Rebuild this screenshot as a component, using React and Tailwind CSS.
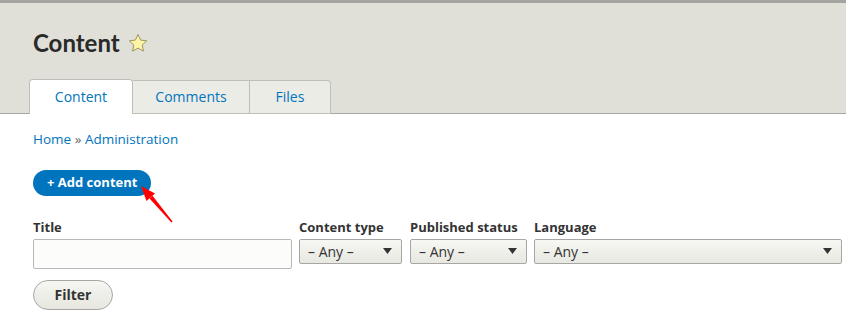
import React from 'react';

const font = { fontFamily: '"Open Sans", "Noto Sans", Arial, sans-serif' };

const Select = ({ width }) => (
  <div className={`${width} h-[25px] flex items-center justify-between pl-[8px] pr-[9px] border border-[#a6a6a6] rounded-[2px] bg-gradient-to-b from-[#f7f7f4] to-[#e8e8e1] text-[14px] text-[#333]`}>
    <span>– Any –</span>
    <svg width="9" height="6" viewBox="0 0 9 6"><path d="M0 0h9L4.5 6z" fill="#333" /></svg>
  </div>
);

export default function App() {
  return (
    <div className="relative w-[846px] h-[316px] bg-white overflow-hidden" style={font}>
      {/* header */}
      <div className="bg-[#e0e0d8] border-t-[3px] border-[#a3a39f] border-b border-b-[#a6a6a6] h-[114px] flex flex-col">
        <div className="flex items-center gap-[8px] pl-[33px] pt-[26px]">
          <h1 className="text-[24px] font-bold text-[#2a2a2a] leading-[28px]" style={{ fontFamily: 'Lato, "Open Sans", sans-serif' }}>Content</h1>
          <svg width="20" height="20" viewBox="0 0 20 19">
            <path d="M10 1l2.6 5.6 6.1.7-4.5 4.2 1.2 6.1L10 14.6 4.6 17.6l1.2-6.1L1.3 7.3l6.1-.7z" fill="#fff4a6" stroke="#9c9660" strokeWidth="1" strokeLinejoin="round" />
          </svg>
        </div>
        <div className="flex pl-[29px] mt-auto -mb-px">
          <div className="w-[104px] h-[35px] bg-white border border-[#bfbfba] border-b-0 rounded-t-[4px] flex items-center justify-center text-[14px] text-[#0074bd] pb-[2px]">Content</div>
          <div className="w-[117px] h-[34px] mt-px bg-[#ececE6] border border-l-0 border-[#bfbfba] flex items-center justify-center text-[14px] text-[#0074bd] pb-[2px]">Comments</div>
          <div className="w-[81px] h-[34px] mt-px bg-[#ececE6] border border-l-0 border-[#bfbfba] rounded-tr-[4px] flex items-center justify-center text-[14px] text-[#0074bd] pb-[2px]">Files</div>
        </div>
      </div>

      {/* body */}
      <div className="pl-[33px] pr-[4px]">
        <div className="pt-[15px] text-[13.5px] text-[#0074bd] leading-[20px]">
          Home <span className="text-[#666]">»</span> Administration
        </div>
        <div className="pt-[20px]">
          <button className="h-[26px] px-[14px] rounded-full bg-[#0074bd] text-white text-[13px] font-bold leading-none">+ Add content</button>
        </div>
        <div className="flex gap-[7px] pt-[22px] items-start">
          <div className="flex flex-col w-[259px]">
            <label className="text-[13px] font-bold text-[#333] leading-[18px]">Title</label>
            <div className="h-[30px] mt-[3px] border border-[#b8b8b8] rounded-[2px] bg-[#fcfcfa]" />
          </div>
          <div className="flex flex-col">
            <label className="text-[13px] font-bold text-[#333] leading-[18px]">Content type</label>
            <div className="mt-[3px]"><Select width="w-[103px]" /></div>
          </div>
          <div className="flex flex-col ml-px">
            <label className="text-[13px] font-bold text-[#333] leading-[18px]">Published status</label>
            <div className="mt-[3px]"><Select width="w-[117px]" /></div>
          </div>
          <div className="flex flex-col flex-1">
            <label className="text-[13px] font-bold text-[#333] leading-[18px]">Language</label>
            <div className="mt-[3px]"><Select width="w-full" /></div>
          </div>
        </div>
        <div className="pt-[11px]">
          <button className="w-[80px] h-[30px] rounded-full border border-[#a6a6a6] bg-gradient-to-b from-[#f6f6f3] to-[#e7e7df] text-[14px] font-bold text-[#333]">Filter</button>
        </div>
      </div>

      {/* annotation arrow */}
      <svg className="absolute left-0 top-0" width="846" height="316">
        <path d="M172.6 221.6 L171.4 222.4 L149.5 198.4 L152.5 195.8 Z" fill="#ff0000" />
        <path d="M141 186 L155 193.5 L146.5 201 Z" fill="#ff0000" />
      </svg>
    </div>
  );
}
